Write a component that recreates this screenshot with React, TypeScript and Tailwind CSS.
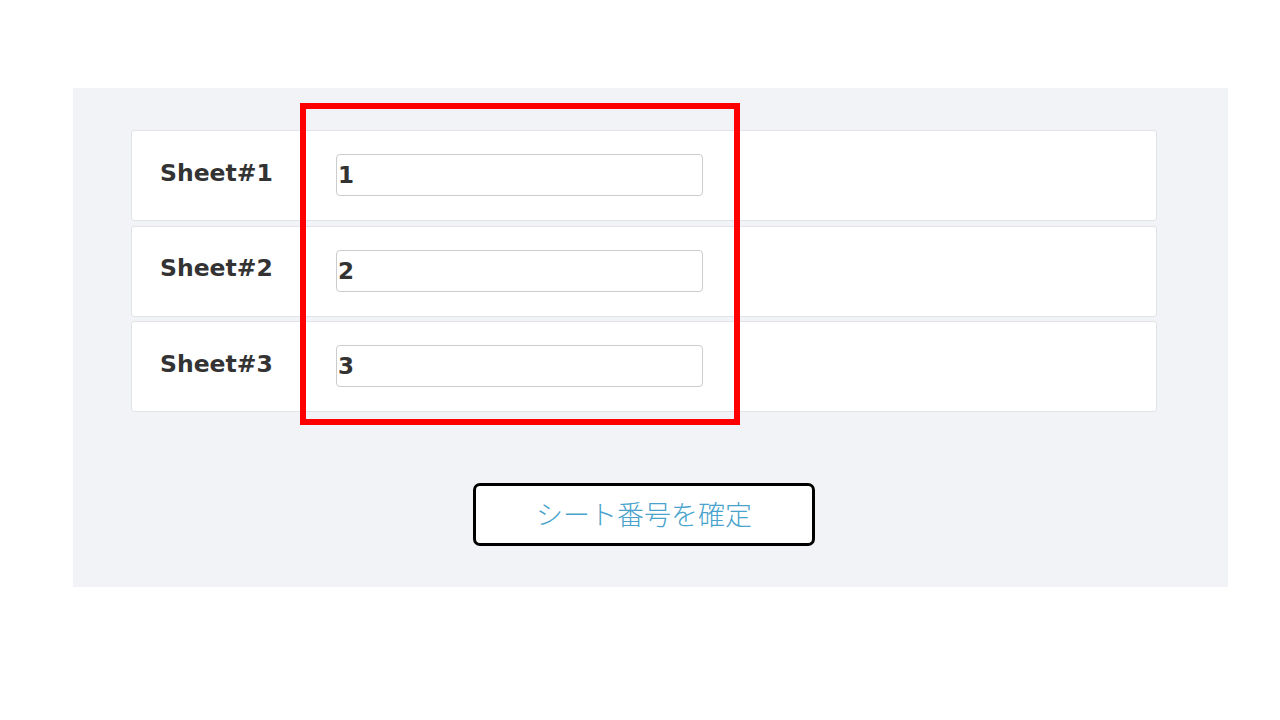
import { useState } from 'react'

const SHEETS = [
  { label: 'Sheet#1', value: '1' },
  { label: 'Sheet#2', value: '2' },
  { label: 'Sheet#3', value: '3' },
]

const FONT = {
  fontFamily: '"DejaVu Sans", "Noto Sans CJK JP", sans-serif',
}

const JP_FONT = {
  fontFamily: '"Noto Sans CJK JP", sans-serif',
}

function SheetRow({ label, initial }: { label: string; initial: string }) {
  const [value, setValue] = useState(initial)
  return (
    <div className="flex h-[91px] items-center rounded-[3px] border border-[#e2e3e6] bg-white">
      <div className="w-[204px] pb-[4px] pl-[28px] text-[23.5px] font-bold leading-none text-[#333333]">
        {label}
      </div>
      <input
        value={value}
        onChange={(e) => setValue(e.target.value)}
        className="mb-[1px] h-[42px] w-[367px] rounded-[4px] border border-[#cccccc] bg-white px-[1px] text-[23px] font-bold text-[#333333] outline-none"
        style={FONT}
      />
    </div>
  )
}

export default function App() {
  return (
    <div className="relative h-[720px] w-[1280px] bg-white pt-[88px]" style={FONT}>
      <div className="ml-[73px] h-[499px] w-[1155px] bg-[#f2f3f7] pt-[42px]">
        <div className="ml-[58px] flex w-[1026px] flex-col gap-[4.5px]">
          {SHEETS.map((s) => (
            <SheetRow key={s.label} label={s.label} initial={s.value} />
          ))}
        </div>
        <div className="ml-[58px] flex w-[1026px] justify-center pt-[71px]">
          <button
            type="button"
            className="h-[63px] w-[342px] rounded-[7px] border-[3px] border-black bg-white text-[27px] font-light text-[#4aa3cc]"
            style={JP_FONT}
          >
            シート番号を確定
          </button>
        </div>
      </div>
      {/* highlight marker */}
      <div className="pointer-events-none absolute left-[300px] top-[103px] h-[322px] w-[440px] border-[6px] border-[#ff0000]" />
    </div>
  )
}
